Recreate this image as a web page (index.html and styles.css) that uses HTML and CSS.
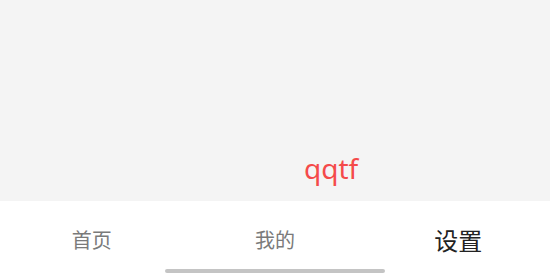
FILE: index.html
```html
<!DOCTYPE html>
<html lang="zh">
<head>
<meta charset="utf-8">
<link rel="stylesheet" href="styles.css">
</head>
<body>
<div class="screen">
  <main class="content">
    <span class="title">qqtf</span>
  </main>
  <nav class="tabbar">
    <div class="tabs">
      <div class="tab">首页</div>
      <div class="tab">我的</div>
      <div class="tab active">设置</div>
    </div>
    <div class="indicator"></div>
  </nav>
</div>
</body>
</html>
```
FILE: styles.css
```css
html, body {
  margin: 0;
  padding: 0;
  background: #ffffff;
}
.screen {
  width: 550px;
  height: 275px;
  display: flex;
  flex-direction: column;
  font-family: "Noto Sans", "Noto Sans CJK SC", sans-serif;
}
.content {
  height: 201px;
  background: #f4f4f4;
  display: flex;
  align-items: flex-end;
  padding-left: 304px;
  box-sizing: border-box;
}
.title {
  color: #f44a4a;
  font-size: 28px;
  line-height: 38px;
  margin-bottom: 14px;
}
.tabbar {
  flex: 1;
  display: flex;
  flex-direction: column;
  align-items: center;
  background: #ffffff;
}
.tabs {
  width: 100%;
  display: grid;
  grid-template-columns: 1fr 1fr 1fr;
  padding-top: 26px;
}
.tab {
  text-align: center;
  font-family: "Noto Sans CJK SC", sans-serif;
  font-size: 20px;
  line-height: 26px;
  color: #7a7a7a;
}
.tab.active {
  font-size: 24px;
  color: #222222;
}
.indicator {
  width: 220px;
  height: 4px;
  border-radius: 2px;
  background: #c4c4c4;
  margin-top: 16px;
}
```
